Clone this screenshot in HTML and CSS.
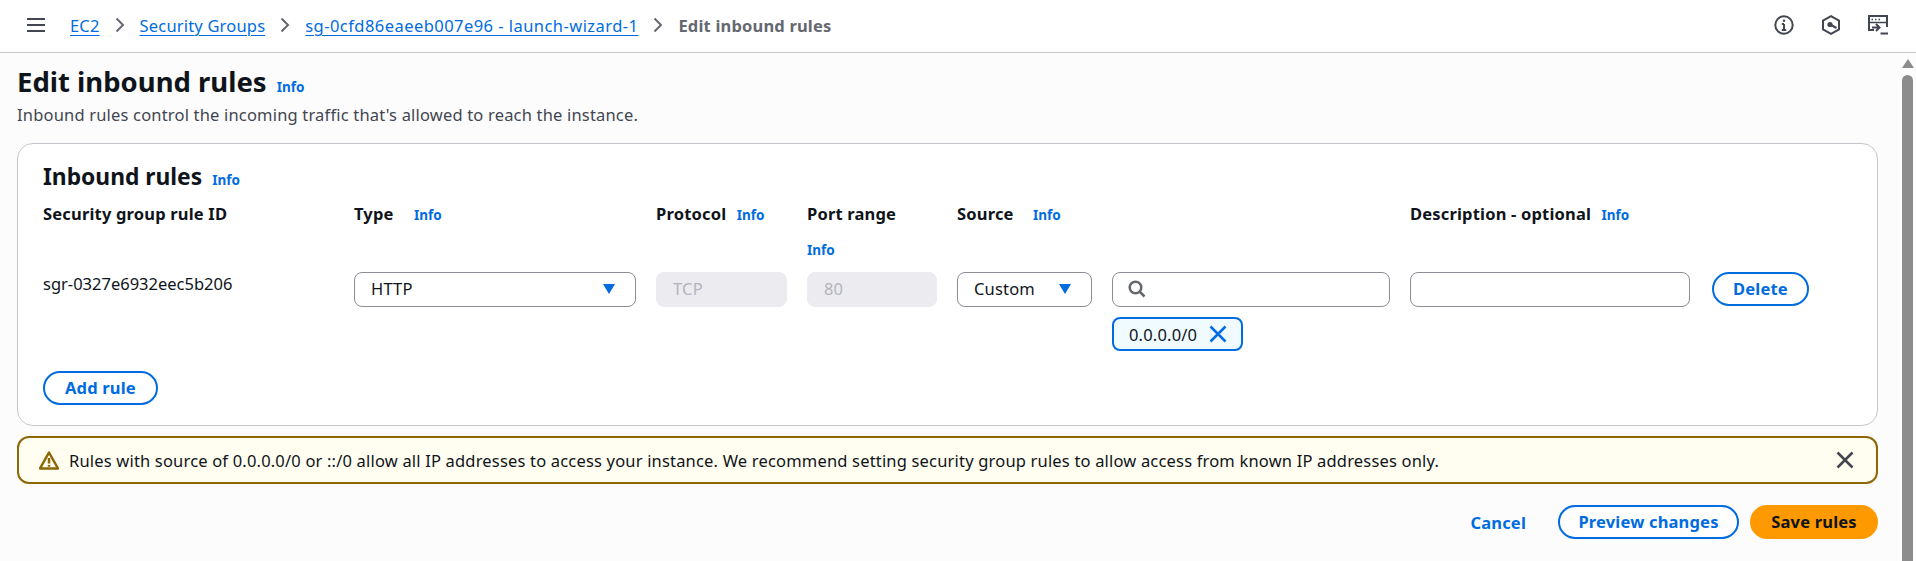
FILE: index.html
```html
<!DOCTYPE html>
<html lang="en">
<head>
<meta charset="UTF-8">
<meta name="viewport" content="width=device-width, initial-scale=1.0">
<title>Edit inbound rules</title>
<link rel="stylesheet" href="styles.css">
</head>
<body>
    <header class="topbar">
        <svg class="menu-icon" width="18" height="16" viewBox="0 0 18 16"><path d="M0 2h18M0 8h18M0 14h18"/></svg>
        <nav class="crumbs">
            <a href="#">EC2</a>
            <svg class="crumb-sep" width="10" height="16" viewBox="0 0 10 16"><path d="M1.5 1.5 8 8l-6.500 6.500"/></svg>
            <a href="#">Security Groups</a>
            <svg class="crumb-sep" width="10" height="16" viewBox="0 0 10 16"><path d="M1.5 1.5 8 8l-6.500 6.500"/></svg>
            <a class="crumb-sg" href="#">sg-0cfd86eaeeb007e96 - launch-wizard-1</a>
            <svg class="crumb-sep" width="10" height="16" viewBox="0 0 10 16"><path d="M1.5 1.5 8 8l-6.500 6.500"/></svg>
            <span class="crumb-current">Edit inbound rules</span>
        </nav>
        <div class="top-icons">
            <svg width="20" height="20" viewBox="0 0 20 20"><circle cx="10" cy="10" r="8.700"/><path d="M10 9v6M7.800 15h4.400M7.800 9H10"/><circle class="dot" cx="10" cy="5.800" r="1.200"/></svg>
            <svg width="20" height="20" viewBox="0 0 20 20"><path d="M10 1.200 18 5.600v8.800l-8 4.400-8-4.400V5.600z"/><circle class="dot" cx="9" cy="9.500" r="2.600"/><path d="m10 10 5.500 3"/></svg>
            <svg width="20" height="20" viewBox="0 0 20 20"><path d="M6 15H1V1h18v11"/><path d="M3.500 4.500H5M7 4.500h1.500M10.500 4.500H12" class="thin"/><path d="M1 7.500h18" class="thin"/><path d="M4 12.500h7M8 9l3.500 3.500L8 16M12.500 18.500H20"/></svg>
        </div>
    </header>

    <div class="page">
        <main class="content">
            <div class="title-row">
                <h1>Edit inbound rules</h1>
                <a class="info" href="#">Info</a>
            </div>
            <p class="subtitle">Inbound rules control the incoming traffic that's allowed to reach the instance.</p>

            <section class="card">
                <div class="card-title">
                    <h2>Inbound rules</h2>
                    <a class="info" href="#">Info</a>
                </div>
                <div class="rules-grid">
                    <div class="col-head">Security group rule ID</div>
                    <div class="col-head">Type <a class="info info-wide" href="#">Info</a></div>
                    <div class="col-head">Protocol <a class="info" href="#">Info</a></div>
                    <div class="col-head col-port">Port range <a class="info" href="#">Info</a></div>
                    <div class="col-head span-2">Source <a class="info info-mid" href="#">Info</a></div>
                    <div class="col-head">Description - optional <a class="info" href="#">Info</a></div>
                    <div></div>

                    <div class="rule-id">sgr-0327e6932eec5b206</div>
                    <div class="field select">HTTP <span class="caret"></span></div>
                    <div class="field disabled">TCP</div>
                    <div class="field disabled">80</div>
                    <div class="field select">Custom <span class="caret"></span></div>
                    <div class="source-cell">
                        <div class="field search">
                            <svg width="18" height="18" viewBox="0 0 18 18"><circle cx="7.500" cy="7.500" r="5.800"/><path d="m11.500 11.500 5 5"/></svg>
                        </div>
                        <div class="token">0.0.0.0/0
                            <svg width="18" height="18" viewBox="0 0 18 18"><path d="m1.500 1.500 15 15M16.500 1.500l-15 15"/></svg>
                        </div>
                    </div>
                    <div class="field"></div>
                    <div><button class="btn delete">Delete</button></div>
                </div>
                <button class="btn add-rule">Add rule</button>
            </section>

            <div class="alert">
                <svg class="alert-icon" width="20" height="19" viewBox="0 0 20 19"><path d="M10 1.500 1 17.500h18z"/><path d="M10 7v5.500M10 14v1.800"/></svg>
                <span class="alert-text">Rules with source of 0.0.0.0/0 or ::/0 allow all IP addresses to access your instance. We recommend setting security group rules to allow access from known IP addresses only.</span>
                <svg class="alert-close" width="18" height="18" viewBox="0 0 18 18"><path d="m1.500 1.500 15 15M16.500 1.500l-15 15"/></svg>
            </div>

            <div class="actions">
                <a class="cancel" href="#">Cancel</a>
                <button class="btn preview">Preview changes</button>
                <button class="btn primary">Save rules</button>
            </div>
        </main>
        <div class="scrollbar">
            <span class="scroll-up"></span>
            <span class="scroll-thumb"></span>
        </div>
    </div>
</body>
</html>
```

FILE: styles.css
```css
* {
    box-sizing: border-box;
}

html, body {
    height: 100%;
    margin: 0;
    overflow: hidden;
}

body {
    font-family: "Noto Sans", sans-serif;
    font-size: 16.500px;
    letter-spacing: .18px;
    color: #0f141a;
    background: #fcfcfc;
}

a {
    color: #006ce0;
}

.topbar {
    height: 53px;
    display: flex;
    align-items: center;
    padding: 0 28px 2px 27px;
    background: #fff;
    border-bottom: 1px solid #c6c6cd;
}

.menu-icon path {
    fill: none;
    stroke: #424650;
    stroke-width: 2.200;
}

.crumbs {
    display: flex;
    align-items: center;
    margin-left: 25px;
}

.crumbs a {
    text-decoration-thickness: 1px;
    text-underline-offset: 3px;
}

.crumbs .crumb-sg {
    letter-spacing: .45px;
}

.crumb-sep {
    margin: 0 15px;
}

.crumb-sep path {
    fill: none;
    stroke: #656871;
    stroke-width: 2;
}

.crumb-current {
    font-weight: 700;
    color: #656871;
}

.top-icons {
    margin-left: auto;
    display: flex;
    align-items: center;
    gap: 27px;
}

.top-icons svg * {
    fill: none;
    stroke: #424650;
    stroke-width: 2;
}

.top-icons svg .dot {
    fill: #424650;
    stroke: none;
}

.top-icons svg .thin {
    stroke-width: 1.500;
}

.page {
    display: flex;
    height: calc(100% - 53px);
}

.content {
    flex: 1;
    padding: 0 23px 0 17px;
    min-width: 0;
}

.title-row {
    display: flex;
    align-items: baseline;
    gap: 10px;
    height: 42px;
    padding-top: 11px;
}

h1 {
    margin: 0;
    font-size: 27.500px;
    line-height: 36px;
    font-weight: 700;
    letter-spacing: 0;
}

.info {
    font-size: 13.500px;
    font-weight: 700;
    letter-spacing: 0;
    text-decoration: none;
}

.subtitle {
    margin: 10px 0 0;
    line-height: 20px;
    color: #424650;
}

.card {
    margin-top: 18px;
    height: 283px;
    padding: 20px 25px 0;
    background: #fff;
    border: 1px solid #c6c6cd;
    border-radius: 16px;
}

.card-title {
    display: flex;
    align-items: baseline;
    gap: 10px;
}

h2 {
    margin: 0;
    font-size: 22.800px;
    line-height: 26px;
    font-weight: 700;
    letter-spacing: 0;
}

.rules-grid {
    display: grid;
    grid-template-columns: 291px 282px 131px 130px 135px 278px 280px auto;
    column-gap: 20px;
    margin-top: 12px;
}

.col-head {
    height: 70px;
    font-weight: 700;
    line-height: 23px;
}

.col-head .info {
    margin-left: 6px;
}

.col-head .info-wide {
    margin-left: 16px;
}

.col-head .info-mid {
    margin-left: 15px;
}

.col-port .info {
    display: block;
    margin: 14px 0 0;
}

.span-2 {
    grid-column: span 2;
}

.rule-id {
    line-height: 20px;
    padding-top: 2px;
    letter-spacing: 0;
}

.field {
    height: 35px;
    display: flex;
    align-items: center;
    padding: 0 16px 2px;
    background: #fff;
    border: 1px solid #8c8c94;
    border-radius: 8px;
}

.select {
    justify-content: space-between;
    padding-right: 20px;
}

.caret {
    width: 0;
    height: 0;
    border-left: 6.500px solid transparent;
    border-right: 6.500px solid transparent;
    border-top: 10px solid #006ce0;
}

.disabled {
    background: #ebebf0;
    border-color: #ebebf0;
    color: #b4b4bb;
}

.search {
    padding-left: 15px;
}

.search svg * {
    fill: none;
    stroke: #656871;
    stroke-width: 2.500;
}

.token {
    display: inline-flex;
    align-items: center;
    gap: 12px;
    height: 34px;
    margin-top: 10px;
    padding: 0 14px 0 15px;
    background: #f0fbff;
    border: 2px solid #006ce0;
    border-radius: 8px;
}

.token svg * {
    fill: none;
    stroke: #006ce0;
    stroke-width: 2.500;
}

.btn {
    font: 700 16.500px "Noto Sans", sans-serif;
    letter-spacing: .18px;
    height: 34px;
    padding: 0 20px 2px;
    color: #006ce0;
    background: #fff;
    border: 2px solid #006ce0;
    border-radius: 17px;
}

.delete {
    margin-left: 2px;
    padding-left: 19px;
    padding-right: 19px;
}

.add-rule {
    display: block;
    margin-top: 20px;
}

.alert {
    display: flex;
    align-items: center;
    height: 48px;
    margin-top: 10px;
    padding: 0 22px 0 20px;
    background: #fffef0;
    border: 2px solid #8d6605;
    border-radius: 12px;
}

.alert-icon * {
    fill: none;
    stroke: #8d6605;
    stroke-width: 2.500;
    stroke-linejoin: round;
}

.alert-text {
    margin-left: 10px;
}

.alert-close {
    margin-left: auto;
}

.alert-close path {
    fill: none;
    stroke: #424650;
    stroke-width: 2.500;
}

.actions {
    display: flex;
    justify-content: flex-end;
    align-items: center;
    margin-top: 21px;
}

.cancel {
    font-weight: 700;
    text-decoration: none;
    margin-right: 32px;
}

.preview {
    width: 181px;
    padding-left: 0;
    padding-right: 0;
    background: #fff;
}

.primary {
    width: 128px;
    margin-left: 11px;
    padding-left: 0;
    padding-right: 0;
    color: #0f141a;
    background: #ff9900;
    border-color: #ff9900;
}

.scrollbar {
    flex: 0 0 14px;
    width: 14px;
    margin-left: 1px;
    display: flex;
    flex-direction: column;
    align-items: center;
    padding: 6px 3px 0 0;
}

.scroll-up {
    width: 0;
    height: 0;
    border-left: 6px solid transparent;
    border-right: 6px solid transparent;
    border-bottom: 9px solid #8c8c8c;
}

.scroll-thumb {
    flex: 1;
    width: 11px;
    margin-top: 7px;
    background: #8c8c8c;
    border-radius: 6px 6px 0 0;
}
```
